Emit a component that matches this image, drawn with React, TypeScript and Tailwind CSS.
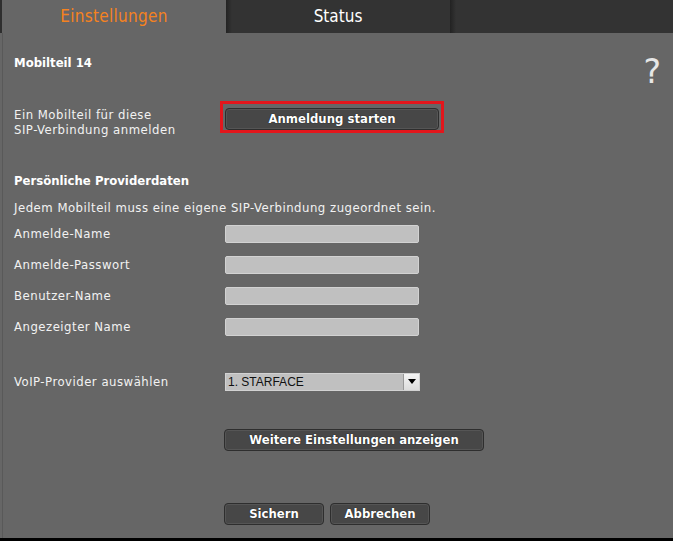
import React from "react";

const font = "font-['DejaVu_Sans_Condensed','DejaVu_Sans',sans-serif]";

function Btn({ children, w }: { children: React.ReactNode; w: string }) {
  return (
    <button
      className={`${w} h-[22px] rounded-[4px] border border-[#2e2e2e] bg-[#474747] text-[13px] font-bold text-white shadow-[inset_0_0_0_1px_#555] leading-[20px] [text-shadow:0_0_1px_#000]`}
    >
      {children}
    </button>
  );
}

function Field() {
  return <div className="w-[194px] h-[18px] rounded-[2px] border border-[#d2d2d2] bg-[#c0c0c0]" />;
}

function Row({ label, children }: { label: string; children: React.ReactNode }) {
  return (
    <div className="flex items-center h-[31px]">
      <div className="w-[211px] text-[13px] leading-[16px] tracking-[0.5px] text-[#f2f2f2]">{label}</div>
      {children}
    </div>
  );
}

export default function App() {
  return (
    <div className={`w-[673px] h-[541px] flex flex-col bg-[#666666] ${font}`}>
      <div className="h-[33px] flex bg-[#333333]">
        <div className="w-[226px] border-l-2 border-[#2e2e2e] bg-[#666666] flex items-center justify-center text-[17px] tracking-[0.3px] text-[#f5821f]">
          Einstellungen
        </div>
        <div className="w-[224px] flex items-center justify-center text-[17px] text-white bg-[linear-gradient(to_right,#232323,#333333_6px)]">
          Status
        </div>
        <div className="flex-1 bg-[linear-gradient(to_right,#222222,#333333_6px)]" />
      </div>
      <div className="flex-1 flex flex-col pl-[14px] pr-[12px] border-b-[3px] border-black rounded-tr-[4px] shadow-[inset_2px_0_0_#666,inset_3px_0_0_#595959] text-[#f2f2f2]">
        <div className="mt-[22px] h-[16px] flex justify-between items-start">
          <div className="text-[13px] font-bold leading-[16px] text-white">Mobilteil 14</div>
          <div className="text-[33px] leading-[30px] h-[16px] text-[#e6e6e6] font-['DejaVu_Sans',sans-serif] mt-[2px]">?</div>
        </div>
        <div className="mt-[30px] flex items-start">
          <div className="w-[206px] pt-[6px] text-[13px] leading-[15px] tracking-[0.5px]">
            Ein Mobilteil für diese
            <br />
            SIP-Verbindung anmelden
          </div>
          <div className="w-[224px] h-[32px] border-[3px] border-[#e3161c] p-[2px]">
            <Btn w="w-[214px]">Anmeldung starten</Btn>
          </div>
        </div>
        <div className="mt-[36px] text-[13px] font-bold leading-[16px] text-white">Persönliche Providerdaten</div>
        <div className="mt-[11px] text-[13px] leading-[16px] tracking-[0.5px]">
          Jedem Mobilteil muss eine eigene SIP-Verbindung zugeordnet sein.
        </div>
        <div className="mt-[2px] flex flex-col">
          <Row label="Anmelde-Name">
            <Field />
          </Row>
          <Row label="Anmelde-Passwort">
            <Field />
          </Row>
          <Row label="Benutzer-Name">
            <Field />
          </Row>
          <Row label="Angezeigter Name">
            <Field />
          </Row>
        </div>
        <div className="mt-[24px]">
          <Row label="VoIP-Provider auswählen">
            <div className="w-[195px] h-[18px] flex border border-[#d2d2d2] bg-[#c0c0c0]">
              <div className="flex-1 pl-[2px] text-[12px] leading-[16px] text-[#111] font-['Liberation_Sans',Arial,sans-serif]">
                1. STARFACE
              </div>
              <div className="w-[16px] h-full bg-[linear-gradient(to_bottom,#f4f4f4,#dcdcdc)] border-l border-[#999] flex items-center justify-center">
                <svg width="8" height="5" viewBox="0 0 8 5">
                  <path d="M0 0H8L4 5Z" fill="#000" />
                </svg>
              </div>
            </div>
          </Row>
        </div>
        <div className="mt-[30px] pl-[210px]">
          <Btn w="w-[260px]">Weitere Einstellungen anzeigen</Btn>
        </div>
        <div className="mt-[52px] pl-[210px] flex gap-[6px]">
          <Btn w="w-[100px]">Sichern</Btn>
          <Btn w="w-[100px]">Abbrechen</Btn>
        </div>
      </div>
    </div>
  );
}
